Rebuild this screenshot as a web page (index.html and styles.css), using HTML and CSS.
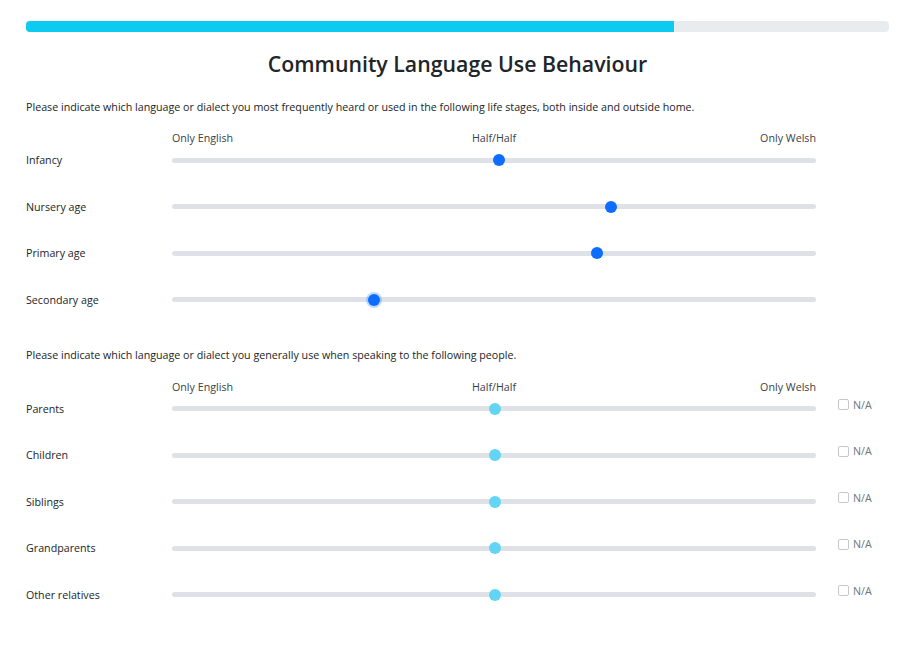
FILE: index.html
```html
<!DOCTYPE html>
<html lang="en">
<head>
<meta charset="utf-8">
<title>Community Language Use Behaviour</title>
<link rel="stylesheet" href="styles.css">
</head>
<body>
<main class="page">
  <div class="progress"><div class="progress-fill" style="width: 75.1%"></div></div>
  <h1 class="title">Community Language Use Behaviour</h1>

  <section class="block">
    <p class="intro">Please indicate which language or dialect you most frequently heard or used in the following life stages, both inside and outside home.</p>
    <div class="scale-head">
      <span class="scale-left">Only English</span>
      <span class="scale-mid">Half/Half</span>
      <span class="scale-right">Only Welsh</span>
    </div>
    <div class="rows">
      <div class="row"><span class="row-label">Infancy</span><input class="slider" type="range" min="0" max="100" step="any" value="50.8"></div>
      <div class="row"><span class="row-label">Nursery age</span><input class="slider" type="range" min="0" max="100" step="any" value="68.5"></div>
      <div class="row"><span class="row-label">Primary age</span><input class="slider" type="range" min="0" max="100" step="any" value="66.3"></div>
      <div class="row"><span class="row-label">Secondary age</span><input class="slider slider-focus" type="range" min="0" max="100" step="any" value="31"></div>
    </div>
  </section>

  <section class="block block-second">
    <p class="intro">Please indicate which language or dialect you generally use when speaking to the following people.</p>
    <div class="scale-head">
      <span class="scale-left">Only English</span>
      <span class="scale-mid">Half/Half</span>
      <span class="scale-right">Only Welsh</span>
    </div>
    <div class="rows">
      <div class="row"><span class="row-label">Parents</span><input class="slider slider-idle" type="range" min="0" max="100" step="any" value="50.2"><label class="na"><input type="checkbox"><span>N/A</span></label></div>
      <div class="row"><span class="row-label">Children</span><input class="slider slider-idle" type="range" min="0" max="100" step="any" value="50.2"><label class="na"><input type="checkbox"><span>N/A</span></label></div>
      <div class="row"><span class="row-label">Siblings</span><input class="slider slider-idle" type="range" min="0" max="100" step="any" value="50.2"><label class="na"><input type="checkbox"><span>N/A</span></label></div>
      <div class="row"><span class="row-label">Grandparents</span><input class="slider slider-idle" type="range" min="0" max="100" step="any" value="50.2"><label class="na"><input type="checkbox"><span>N/A</span></label></div>
      <div class="row"><span class="row-label">Other relatives</span><input class="slider slider-idle" type="range" min="0" max="100" step="any" value="50.2"><label class="na"><input type="checkbox"><span>N/A</span></label></div>
    </div>
  </section>
</main>
</body>
</html>
```

FILE: styles.css
```css
* { box-sizing: border-box; }

html, body {
  margin: 0;
  padding: 0;
  background: #ffffff;
}

body {
  font-family: "Open Sans", "Noto Sans", "Liberation Sans", sans-serif;
  font-size: 10.7px;
  color: #212529;
}

.page {
  padding: 21px 23px 0 26px;
}

.progress {
  height: 11px;
  background: #e9ecef;
  border-radius: 4px;
  overflow: hidden;
}

.progress-fill {
  height: 100%;
  background: #0dcaf0;
}

.title {
  margin: 18px 0 0;
  text-align: center;
  font-size: 21.3px;
  line-height: 28px;
  font-weight: 600;
  color: #212529;
}

.block {
  margin-top: 21px;
}

.block-second {
  margin-top: 39px;
}

.intro {
  margin: 0;
  line-height: 16px;
}

.scale-head {
  display: grid;
  grid-template-columns: 1fr auto 1fr;
  width: 644px;
  margin: 15px 0 0 146px;
  line-height: 16px;
  color: #3a3f44;
}

.block-second .scale-head { margin-top: 16px; }

.scale-mid { text-align: center; }
.scale-right { text-align: right; }

.rows {
  display: flex;
  flex-direction: column;
  gap: 30.5px;
  margin-top: 6px;
}

.block-second .rows { margin-top: 6px; }

.row {
  display: grid;
  grid-template-columns: 146px 644px auto;
  align-items: center;
  height: 16px;
}

.row-label {
  line-height: 16px;
}

.slider {
  -webkit-appearance: none;
  appearance: none;
  width: 644px;
  height: 12px;
  margin: 0;
  padding: 0;
  background: transparent;
}

.slider::-webkit-slider-runnable-track {
  height: 5px;
  background: #dee2e6;
  border-radius: 3px;
}

.slider::-webkit-slider-thumb {
  -webkit-appearance: none;
  appearance: none;
  width: 12px;
  height: 12px;
  margin-top: -3.5px;
  border: none;
  border-radius: 50%;
  background: #0d6efd;
}

.slider-focus::-webkit-slider-thumb {
  box-shadow: 0 0 0 2px rgba(13, 110, 253, 0.25);
}

.slider-idle::-webkit-slider-thumb {
  background: #62d5f4;
}

.na {
  display: flex;
  align-items: center;
  gap: 4px;
  margin: -8px 0 0 22px;
  color: #6c757d;
  line-height: 16px;
}

.na input {
  -webkit-appearance: none;
  appearance: none;
  width: 11px;
  height: 11px;
  margin: 0;
  border: 1px solid #c5c9cd;
  border-radius: 2px;
  background: #fff;
}
```
